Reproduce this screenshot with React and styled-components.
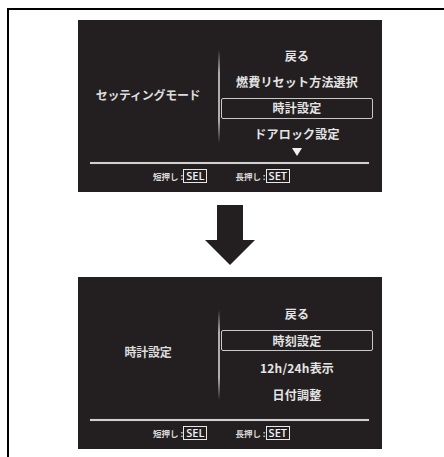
import styled, { createGlobalStyle } from "styled-components";

const GlobalStyle = createGlobalStyle`
  html, body {
    margin: 0;
    padding: 0;
    background: #fff;
    overflow: hidden;
  }
  body {
    font-family: "Noto Sans CJK JP", "Noto Sans", sans-serif;
  }
`;

const screens = [
  {
    title: "セッティングモード",
    rowHeight: 26,
    items: ["戻る", "燃費リセット方法選択", "時計設定", "ドアロック設定"],
    selected: 2,
    more: true,
    dividerTop: 30,
  },
  {
    title: "時計設定",
    rowHeight: 27,
    items: ["戻る", "時刻設定", "12h/24h表示", "日付調整"],
    selected: 1,
    more: false,
    dividerTop: 33,
  },
];

const Frame = styled.div`
  margin: 8px 0 0 7px;
  width: 430px;
  height: 437px;
  border: 2px solid #000;
  border-bottom: none;
  display: flex;
  flex-direction: column;
  align-items: center;
  padding: 10px 0 0 6px;
  box-sizing: content-box;
  overflow: hidden;
`;

const Panel = styled.div`
  width: 304px;
  height: 172px;
  background: #231f20;
  display: flex;
  flex-direction: column;
  color: #e4e4e4;
  font-weight: 700;
  flex-shrink: 0;
`;

const Body = styled.div`
  height: 142px;
  display: flex;
`;

const TitleCol = styled.div`
  width: 140px;
  display: flex;
  align-items: center;
  justify-content: center;
  padding-top: 6px;
  box-sizing: border-box;
  font-size: 12px;
  letter-spacing: -0.3px;
  color: #dcdcdc;
`;

const Divider = styled.div`
  width: 2px;
  margin-top: ${(p) => p.$top}px;
  height: ${(p) => 123 - p.$top}px;
  background: linear-gradient(
    to bottom,
    rgba(170, 170, 170, 0),
    rgba(190, 190, 190, 0.9) 25%,
    rgba(190, 190, 190, 0.9) 75%,
    rgba(170, 170, 170, 0)
  );
`;

const List = styled.div`
  width: 152px;
  margin-left: 1px;
  padding-top: 23px;
  display: flex;
  flex-direction: column;
  align-items: stretch;
`;

const Row = styled.div`
  height: ${(p) => p.$h}px;
  display: flex;
  align-items: center;
  justify-content: center;
`;

const Item = styled.div`
  font-size: 12px;
  letter-spacing: 0.2px;
  line-height: 1;
  display: flex;
  align-items: center;
  justify-content: center;
  width: 100%;
  height: 21px;
  box-sizing: border-box;
  border: 1px solid ${(p) => (p.$active ? "#c8c8c8" : "transparent")};
  border-radius: 2px;
  white-space: nowrap;
`;

const More = styled.div`
  height: 10px;
  display: flex;
  align-items: center;
  justify-content: center;
  &::after {
    content: "";
    border-left: 5px solid transparent;
    border-right: 5px solid transparent;
    border-top: 8px solid #f0f0f0;
  }
`;

const Rule = styled.div`
  height: 2px;
  margin: 0 13px 0 12px;
  background: #cfcfcf;
  box-shadow: 0 0 1px rgba(255, 255, 255, 0.4);
`;

const Footer = styled.div`
  height: 24px;
  display: flex;
  align-items: center;
  padding-left: 75px;
  gap: 28px;
`;

const Hint = styled.div`
  display: flex;
  align-items: center;
`;

const HintLabel = styled.span`
  font-size: 8.5px;
  color: #d8d8d8;
`;

const Key = styled.span`
  font-family: "Open Sans", "DejaVu Sans", sans-serif;
  font-size: 11px;
  font-weight: 600;
  line-height: 12px;
  padding: 0 2px;
  border: 1px solid #e8e8e8;
  color: #f2f2f2;
`;

const Arrow = styled.svg`
  display: block;
  margin: 13px 0 12px;
  flex-shrink: 0;
`;

const Screen = ({ screen }) => (
  <Panel>
    <Body>
      <TitleCol>{screen.title}</TitleCol>
      <Divider $top={screen.dividerTop} />
      <List>
        {screen.items.map((item, i) => (
          <Row key={item} $h={screen.rowHeight}>
            <Item $active={i === screen.selected}>{item}</Item>
          </Row>
        ))}
        {screen.more && <More />}
      </List>
    </Body>
    <Rule />
    <Footer>
      <Hint>
        <HintLabel>短押し :</HintLabel>
        <Key>SEL</Key>
      </Hint>
      <Hint>
        <HintLabel>長押し :</HintLabel>
        <Key>SET</Key>
      </Hint>
    </Footer>
  </Panel>
);

export default function App() {
  return (
    <>
      <GlobalStyle />
      <Frame>
        <Screen screen={screens[0]} />
        <Arrow width="50" height="60" viewBox="0 0 50 60">
          <polygon points="12,0 38,0 38,35 50,35 25,60 0,35 12,35" fill="#231f20" />
        </Arrow>
        <Screen screen={screens[1]} />
      </Frame>
    </>
  );
}
